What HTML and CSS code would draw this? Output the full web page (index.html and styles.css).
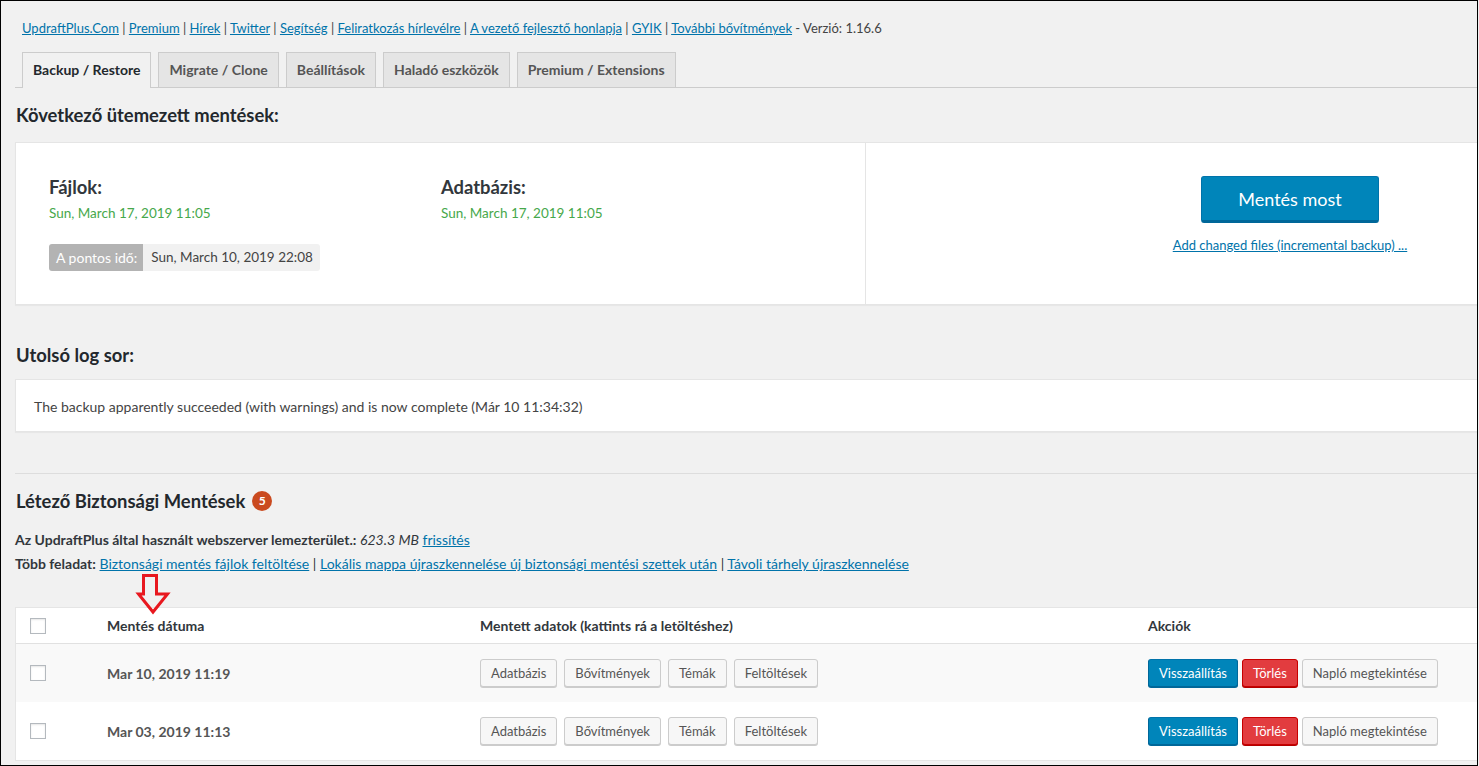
FILE: index.html
```html
<!DOCTYPE html>
<html lang="hu">
<head>
<meta charset="utf-8">
<title>UpdraftPlus Backup / Restore</title>
<link rel="stylesheet" href="styles.css">
</head>
<body>
<div class="frame">
  <div class="wrap">
    <p class="links">
      <a href="#">UpdraftPlus.Com</a> | <a href="#">Premium</a> | <a href="#">Hírek</a> | <a href="#">Twitter</a> | <a href="#">Segítség</a> | <a href="#">Feliratkozás hírlevélre</a> | <a href="#">A vezető fejlesztő honlapja</a> | <a href="#">GYIK</a> | <a href="#">További bővítmények</a> - Verzió: 1.16.6
    </p>
    <nav class="tabs">
      <a class="tab tab-active" href="#">Backup / Restore</a>
      <a class="tab" href="#">Migrate / Clone</a>
      <a class="tab" href="#">Beállítások</a>
      <a class="tab" href="#">Haladó eszközök</a>
      <a class="tab" href="#">Premium / Extensions</a>
    </nav>

    <h2 class="section-title">Következő ütemezett mentések:</h2>
    <div class="schedule">
      <div class="schedule-left">
        <div class="schedule-cols">
          <div class="sched-item">
            <h3 class="sched-title">Fájlok:</h3>
            <div class="sched-date">Sun, March 17, 2019 11:05</div>
          </div>
          <div class="sched-item">
            <h3 class="sched-title">Adatbázis:</h3>
            <div class="sched-date">Sun, March 17, 2019 11:05</div>
          </div>
        </div>
        <div class="time-pill"><span class="pill-label">A pontos idő:</span><span class="pill-value">Sun, March 10, 2019 22:08</span></div>
      </div>
      <div class="schedule-right">
        <button class="btn-backup" type="button">Mentés most</button>
        <a class="incremental" href="#">Add changed files (incremental backup) ...</a>
      </div>
    </div>

    <h2 class="section-title log-title">Utolsó log sor:</h2>
    <div class="log-box">The backup apparently succeeded (with warnings) and is now complete (Már 10 11:34:32)</div>

    <hr class="divider">

    <h2 class="section-title existing-title">Létező Biztonsági Mentések <span class="badge">5</span></h2>
    <p class="meta meta-first"><strong>Az UpdraftPlus által használt webszerver lemezterület.:</strong> <em>623.3 MB</em> <a href="#">frissítés</a></p>
    <p class="meta"><strong>Több feladat:</strong> <a href="#">Biztonsági mentés fájlok feltöltése</a> | <a href="#">Lokális mappa újraszkennelése új biztonsági mentési szettek után</a> | <a href="#">Távoli tárhely újraszkennelése</a></p>

    <div class="table">
      <div class="trow thead">
        <div class="cell cell-check"><span class="checkbox"></span></div>
        <div class="cell">Mentés dátuma</div>
        <div class="cell">Mentett adatok (kattints rá a letöltéshez)</div>
        <div class="cell">Akciók</div>
      </div>
      <div class="trow row-alt">
        <div class="cell cell-check"><span class="checkbox"></span></div>
        <div class="cell cell-date">Mar 10, 2019 11:19</div>
        <div class="cell cell-buttons">
          <span class="btn">Adatbázis</span><span class="btn">Bővítmények</span><span class="btn">Témák</span><span class="btn">Feltöltések</span>
        </div>
        <div class="cell cell-actions">
          <span class="btn btn-primary">Visszaállítás</span><span class="btn btn-delete">Törlés</span><span class="btn">Napló megtekintése</span>
        </div>
      </div>
      <div class="trow">
        <div class="cell cell-check"><span class="checkbox"></span></div>
        <div class="cell cell-date">Mar 03, 2019 11:13</div>
        <div class="cell cell-buttons">
          <span class="btn">Adatbázis</span><span class="btn">Bővítmények</span><span class="btn">Témák</span><span class="btn">Feltöltések</span>
        </div>
        <div class="cell cell-actions">
          <span class="btn btn-primary">Visszaállítás</span><span class="btn btn-delete">Törlés</span><span class="btn">Napló megtekintése</span>
        </div>
      </div>
    </div>
  </div>

  <svg class="arrow" width="50" height="50" viewBox="0 0 50 50" aria-hidden="true">
    <polygon points="13.5,5.5 26.5,5.5 26.5,24 37.5,24 23,42 8.5,24 13.5,24" fill="none" stroke="#e8181f" stroke-width="3" stroke-linejoin="miter"/>
  </svg>
</div>
</body>
</html>
```

FILE: styles.css
```css
* { box-sizing: border-box; }

html, body {
  margin: 0;
  padding: 0;
  background: #f1f1f1;
}

body {
  font-family: "Lato", "Open Sans", "Liberation Sans", sans-serif;
  font-size: 13px;
  color: #444;
}

a { color: #0073aa; }

.frame {
  position: relative;
  width: 1478px;
  height: 766px;
  border: 1px solid #000;
  overflow: hidden;
  background: #f1f1f1;
}

.wrap {
  width: 1715px;
  padding-left: 14px;
}

.links {
  margin: 0;
  padding: 17px 0 0 7px;
  line-height: 20px;
  font-size: 13px;
  color: #444;
  white-space: nowrap;
}

.tabs {
  display: flex;
  align-items: flex-end;
  gap: 7px;
  margin-top: 14px;
  padding-left: 7px;
  height: 36px;
  border-bottom: 1px solid #ccc;
}

.tab {
  display: block;
  height: 35px;
  padding: 0 10px;
  line-height: 33px;
  font-size: 14px;
  font-weight: 700;
  color: #555;
  text-decoration: none;
  background: #e5e5e5;
  border: 1px solid #ccc;
  border-bottom: none;
}

.tab-active {
  height: 36px;
  margin-bottom: -1px;
  background: #f1f1f1;
  color: #23282d;
}

.section-title {
  margin: 15px 0 15px 1px;
  font-size: 18.4px;
  line-height: 24px;
  font-weight: 700;
  color: #23282d;
}

.schedule {
  display: grid;
  grid-template-columns: 1fr 1fr;
  width: 1700px;
  height: 163px;
  background: #fff;
  border: 1px solid #e5e5e5;
  box-shadow: 0 1px 1px rgba(0,0,0,.04);
}

.schedule-left {
  padding: 32px 0 0 33px;
}

.schedule-cols {
  display: grid;
  grid-template-columns: 392px 392px;
}

.sched-title {
  margin: 0;
  font-size: 18.4px;
  line-height: 24px;
  font-weight: 700;
  color: #32373c;
}

.sched-date {
  margin-top: 4px;
  line-height: 20px;
  font-size: 13.5px;
  color: #46a84b;
}

.time-pill {
  display: inline-flex;
  margin-top: 21px;
  height: 27px;
  line-height: 27px;
  border-radius: 3px;
  overflow: hidden;
}

.pill-label {
  padding: 0 6px 0 7px;
  font-size: 14px;
  background: #b3b3b3;
  color: #fff;
}

.pill-value {
  padding: 0 7px 0 8px;
  font-size: 13.5px;
  background: #f1f1f1;
  color: #444;
}

.schedule-right {
  display: flex;
  flex-direction: column;
  align-items: center;
  padding-top: 33px;
  border-left: 1px solid #e5e5e5;
}

.btn-backup {
  width: 178px;
  height: 47px;
  padding: 0;
  font-family: inherit;
  font-size: 18px;
  color: #fff;
  background: #0085ba;
  border: 1px solid #0073aa;
  border-bottom: 3px solid #006799;
  border-radius: 3px;
}

.incremental {
  margin-top: 12px;
  line-height: 20px;
}

.log-title {
  margin-top: 38px;
  margin-bottom: 12px;
}

.log-box {
  width: 1700px;
  padding: 17px 18px 15px;
  line-height: 19px;
  font-size: 14px;
  background: #fff;
  border: 1px solid #e5e5e5;
  box-shadow: 0 1px 1px rgba(0,0,0,.04);
}

.divider {
  width: 1700px;
  margin: 41px 0 0;
  border: 0;
  border-top: 1px solid #ddd;
  height: 0;
}

.existing-title {
  margin-top: 15px;
  margin-bottom: 0;
  display: flex;
  align-items: center;
  gap: 7px;
}

.badge {
  display: inline-flex;
  align-items: center;
  justify-content: center;
  width: 20px;
  height: 20px;
  border-radius: 50%;
  background: #ca4a1f;
  color: #fff;
  font-size: 12px;
  font-weight: 700;
}

.meta {
  margin: 0;
  line-height: 24px;
  font-size: 14px;
  color: #32373c;
}

.meta strong { font-weight: 700; }

.meta-first { margin-top: 15px; }

.table {
  width: 1700px;
  margin-top: 31px;
  background: #fff;
  border: 1px solid #e5e5e5;
}

.trow {
  display: grid;
  grid-template-columns: 79px 373px 668px 1fr;
  align-items: center;
  height: 58px;
}

.thead {
  height: 36px;
  border-bottom: 1px solid #e1e1e1;
  font-size: 14px;
  font-weight: 700;
  color: #32373c;
}

.row-alt { background: #f9f9f9; }

.cell { padding-left: 12px; }

.cell-check {
  padding-left: 14px;
  display: flex;
  align-items: center;
}

.checkbox {
  display: block;
  width: 16px;
  height: 16px;
  background: #fff;
  border: 1px solid #b4b9be;
  box-shadow: inset 0 1px 2px rgba(0,0,0,.1);
}

.cell-date {
  font-size: 14px;
  font-weight: 700;
  color: #555;
}

.cell-buttons, .cell-actions {
  display: flex;
  gap: 7px;
}

.cell-actions { gap: 4px; }

.btn {
  display: inline-block;
  height: 28px;
  padding: 0 10px 1px;
  line-height: 26px;
  font-size: 13px;
  color: #555;
  background: #f7f7f7;
  border: 1px solid #ccc;
  border-radius: 3px;
  box-shadow: 0 1px 0 #ccc;
  white-space: nowrap;
}

.btn-primary {
  background: #0085ba;
  border-color: #0073aa #006799 #006799;
  box-shadow: 0 1px 0 #006799;
  color: #fff;
}

.btn-delete {
  background: #e23c3f;
  border-color: #c70000;
  box-shadow: 0 1px 0 #b30000;
  color: #fff;
}

.arrow {
  position: absolute;
  left: 129px;
  top: 569px;
}
```
